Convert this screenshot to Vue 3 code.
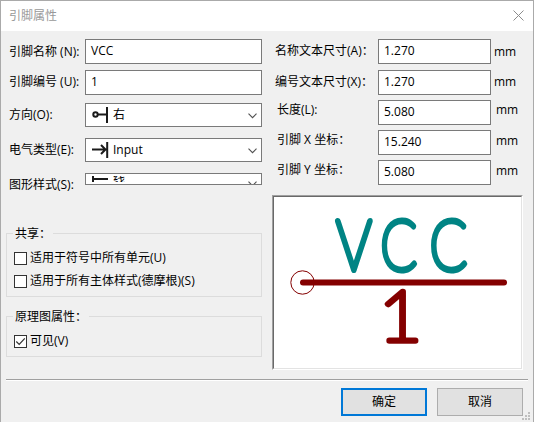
<script setup>
import { ref } from 'vue'

const sizes = ref([
  { label: '名称文本尺寸(A)：', value: '1.270', key: 'name' },
  { label: '编号文本尺寸(X)：', value: '1.270', key: 'number' },
  { label: '长度(L):', value: '5.080', key: 'length' },
  { label: '引脚 X 坐标：', value: '15.240', key: 'posx' },
  { label: '引脚 Y 坐标：', value: '5.080', key: 'posy' },
])
const gripDots = [[6, 0], [3, 3], [6, 3], [0, 6], [3, 6], [6, 6]]
</script>

<template>
  <div class="dialog">
    <header class="titlebar">
      <span class="title">引脚属性</span>
      <svg class="close" width="11" height="11" viewBox="0 0 11 11"><path d="M.5 .5l10 10M10.5 .5l-10 10" /></svg>
    </header>

    <main class="body">
      <section class="left">
        <div class="row r-name"><label>引脚名称 (N):</label><div class="field">VCC</div></div>
        <div class="row r-num"><label>引脚编号 (U):</label><div class="field">1</div></div>
        <div class="row r-dir">
          <label>方向(O):</label>
          <div class="select">
            <svg class="icon" width="18" height="18" viewBox="0 0 18 18">
              <circle cx="3.5" cy="8.5" r="2.2" /><path d="M6 8.5h9M15 1v16" />
            </svg>
            <span>右</span>
            <svg class="chev" width="9" height="6" viewBox="0 0 9 6"><path d="M.5 .7l4 4 4-4" /></svg>
          </div>
        </div>
        <div class="row r-type">
          <label>电气类型(E):</label>
          <div class="select">
            <svg class="icon" width="18" height="18" viewBox="0 0 18 18">
              <path d="M0 8.5h13.5M9 4l4.5 4.5L9 13M15.2 1v16" />
            </svg>
            <span>Input</span>
            <svg class="chev" width="9" height="6" viewBox="0 0 9 6"><path d="M.5 .7l4 4 4-4" /></svg>
          </div>
        </div>
        <div class="row r-style">
          <label>图形样式(S):</label>
          <div class="select clipped">
            <svg class="icon" width="18" height="6" viewBox="0 0 18 6"><path d="M1 0v6M1 3h15" /></svg>
            <span class="cut"><span>线</span></span>
            <svg class="chev" width="9" height="6" viewBox="0 0 9 6"><path d="M.5 .7l4 4 4-4" /></svg>
          </div>
        </div>

        <fieldset class="group share">
          <legend>共享：</legend>
          <div class="check"><i class="box"></i><span>适用于符号中所有单元(U)</span></div>
          <div class="check"><i class="box"></i><span>适用于所有主体样式(德摩根)(S)</span></div>
        </fieldset>
        <fieldset class="group props">
          <legend>原理图属性：</legend>
          <div class="check">
            <i class="box"><svg width="11" height="11" viewBox="0 0 11 11"><path d="M1.3 5.5l2.9 2.9 5.6-6" /></svg></i>
            <span>可见(V)</span>
          </div>
        </fieldset>
      </section>

      <section class="right">
        <div v-for="s in sizes" :key="s.key" class="srow" :class="s.key">
          <label>{{ s.label }}</label>
          <div class="field">{{ s.value }}</div>
          <span class="unit">mm</span>
        </div>
        <div class="preview">
          <svg width="247" height="171" viewBox="274 197 247 171">
            <g class="name">
              <text transform="translate(336.2 270) scale(.79 1)">V</text>
              <text transform="translate(380.5 269.6) scale(.76 .99)">C</text>
              <text transform="translate(429.8 269.6) scale(.78 .99)">C</text>
            </g>
            <circle class="end" cx="302.5" cy="282.5" r="11.7" />
            <path class="pin" d="M303 282.5H504" />
            <text class="num" transform="translate(378.8 340.5) scale(1.07 1)">1</text>
          </svg>
        </div>
      </section>
    </main>

    <footer class="footer">
      <button class="ok">确定</button>
      <button>取消</button>
      <svg class="grip" width="8" height="8" viewBox="0 0 8 8">
        <rect v-for="(d, i) in gripDots" :key="i" :x="d[0]" :y="d[1]" width="2" height="2" />
      </svg>
    </footer>
  </div>
</template>

<style>
body { margin: 0; background: #f0f0f0; }
</style>

<style scoped>
* { box-sizing: border-box; }
.dialog {
  position: relative; width: 534px; height: 422px; overflow: hidden;
  background: #f0f0f0; border: 1px solid #aaa; border-bottom: 0;
  font: 12px/16px "Open Sans", "Noto Sans CJK SC", sans-serif; color: #000; white-space: nowrap;
}
svg { display: block; fill: none; }
.titlebar { height: 30px; background: #fff; display: flex; align-items: center; justify-content: space-between; padding: 0 9px 0 8px; color: #999; }
.close { stroke: #8c8c8c; stroke-width: 1; margin-top: -2px; }
.body { display: flex; height: 348px; padding-top: 8px; }
.left { width: 261px; padding-left: 5px; }
.right { width: 261px; padding-left: 10px; }
.row { display: flex; align-items: center; height: 25px; padding-left: 3px; }
.row label { width: 76px; flex: none; }
.r-num { margin-top: 6px; }
.r-num label { margin-top: -2px; }
.r-dir { margin-top: 8px; height: 24px; }
.r-type { margin-top: 11px; height: 24px; }
.r-style { margin-top: 11px; height: 12px; }
.r-style label { margin-top: 12px; }
.field { height: 25px; flex: 1; border: 1px solid #7a7a7a; background: #fff; padding: 3px 5px; }
.select { height: 24px; flex: 1; display: flex; align-items: center; border: 1px solid #7a7a7a; background: #fff; padding: 0 4px 0 6px; overflow: hidden; }
.select > span { margin-left: 3px; flex: 1; }
.icon { stroke: #1a1a1a; stroke-width: 2; }
.chev { stroke: #505050; stroke-width: 1.1; margin-top: 2px; }
.clipped { height: 12px; align-items: flex-start; }
.clipped .icon { margin-top: 2px; }
.clipped .chev { margin-top: 7px; }
.cut { height: 6px; overflow: hidden; margin-top: 2px; }
.cut span { display: block; margin-top: -5px; }
.group { position: relative; margin: 48px 0 0; padding: 0 0 0 7px; border: 1px solid #dcdcdc; height: 64px; width: 256px; min-width: 0; }
.group legend { position: absolute; top: -8px; left: 6px; padding: 0 2px; background: #f0f0f0; }
.group.props { height: 41px; margin-top: 19px; }
.check { display: flex; align-items: center; height: 16px; margin-top: 16px; }
.check + .check { margin-top: 7px; }
.box { width: 13px; height: 13px; border: 1px solid #333; background: #fff; margin-right: 3px; flex: none; }
.box svg { stroke: #333; stroke-width: 1.2; }
.srow { display: flex; align-items: center; height: 25px; margin-bottom: 5px; padding-left: 3px; }
.srow label { width: 103px; flex: none; margin-top: -2px; }
.srow .field { width: 113px; flex: none; }
.srow.name { margin-bottom: 6px; }
.unit { margin-left: 3px; }
.number .unit { margin-top: -2px; }
.length label, .posx label, .posy label { padding-left: 2px; margin-top: -6px; }
.length .unit, .posx .unit, .posy .unit { margin-left: 5px; margin-top: -5px; }
.posx .unit, .posy .unit { margin-top: -4px; }
.preview { width: 251px; height: 175px; margin: 10px 0 0; border: 1px solid; border-color: #a0a0a0 #fff #fff #a0a0a0; }
.preview svg { width: 249px; height: 173px; background: #fff; border: 1px solid; border-color: #696969 #e3e3e3 #e3e3e3 #696969; }
.preview text { font-family: Lato, "DejaVu Sans", sans-serif; font-weight: 100; font-size: 70px; stroke-width: 6.2px; stroke-linejoin: round; }
.name text { fill: #008484; stroke: #008484; }
.preview .num { fill: #840000; stroke: #840000; stroke-width: 5.6px; }
.end { stroke: #840000; stroke-width: 1; }
.pin { stroke: #840000; stroke-width: 6; stroke-linecap: round; }
.footer { position: relative; margin: 0 5px; border-top: 1px solid #a0a0a0; box-shadow: inset 0 1px #fff; padding: 8px 5px 0; height: 42px; display: flex; justify-content: flex-end; gap: 10px; }
button { width: 86px; height: 28px; border: 1px solid #adadad; background: #e1e1e1; font: inherit; color: #000; padding: 0; }
button.ok { border: 2px solid #0078d7; }
.grip { position: absolute; left: 516px; top: 32px; fill: #bfbfbf; }
</style>
